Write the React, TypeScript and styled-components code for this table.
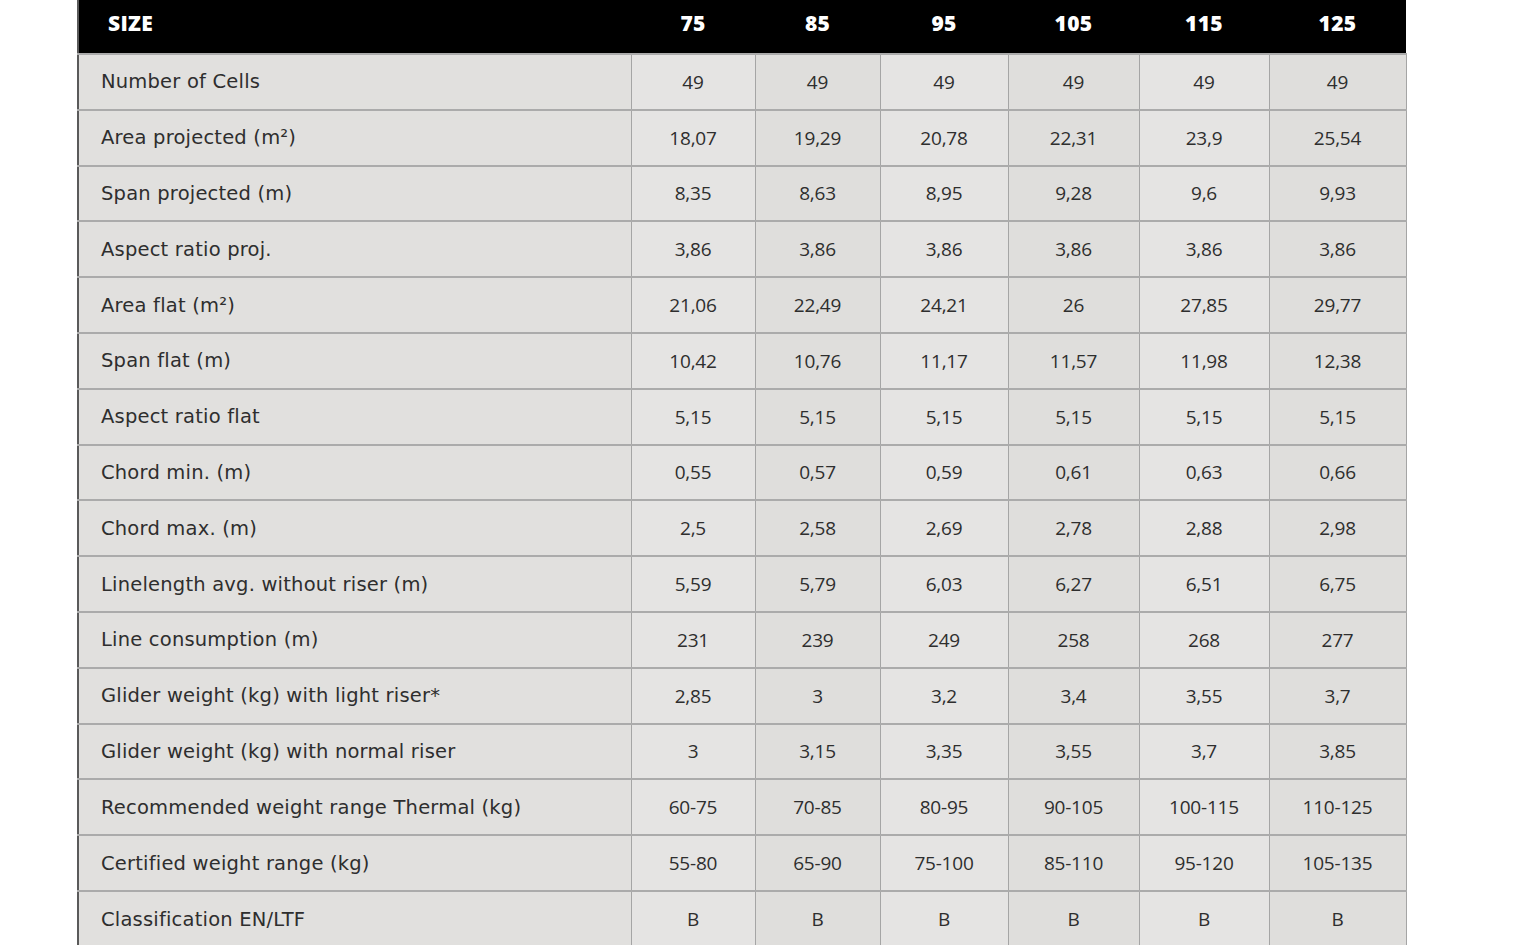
import styled, { createGlobalStyle } from 'styled-components'

const GlobalStyle = createGlobalStyle`
    html, body {
        margin: 0;
        padding: 0;
        background: #ffffff;
    }
    body {
        font-family: 'Open Sans', 'Liberation Sans', sans-serif;
    }
`

const Page = styled.div`
    width: 1530px;
    height: 945px;
    overflow: hidden;
    padding-left: 77px;
    box-sizing: border-box;
`

const Table = styled.table`
    width: 1329px;
    border-collapse: collapse;
    table-layout: fixed;
    border-left: 2px solid #5a5a5a;
`

const HeadCell = styled.th<{ $first?: boolean }>`
    height: 54px;
    padding: 0 0 8px ${(p) => (p.$first ? '29px' : '0')};
    background: #000000;
    color: #ffffff;
    font-family: 'Open Sans', 'Liberation Sans', sans-serif;
    font-weight: 800;
    font-size: 21px;
    text-align: ${(p) => (p.$first ? 'left' : 'center')};
    box-sizing: border-box;
    letter-spacing: 0.3px;
`

const Row = styled.tr`
    height: 55.8px;
`

const LabelCell = styled.td`
    padding: 0 0 0 22px;
    background: #e1e0de;
    color: #2e2e2e;
    font-family: 'DejaVu Sans', 'Open Sans', sans-serif;
    font-size: 19.5px;
    letter-spacing: 0.2px;
    border-top: 2px solid #ababab;
    border-right: 1px solid #a5a5a5;
    white-space: nowrap;
`

const ValueCell = styled.td<{ $shade: number }>`
    padding: 0;
    text-align: center;
    background: ${(p) => (p.$shade % 2 === 0 ? '#e5e4e3' : '#dfdedc')};
    color: #2e2e2e;
    font-size: 19px;
    letter-spacing: -0.2px;
    border-top: 2px solid #ababab;
    border-left: 1px solid #a5a5a5;
    border-right: 1px solid #a5a5a5;
`

const sizes = ['75', '85', '95', '105', '115', '125']
const widths = [553, 124, 125, 128, 131, 130, 137]

const rows: [string, string[]][] = [
    ['Number of Cells', ['49', '49', '49', '49', '49', '49']],
    ['Area projected (m²)', ['18,07', '19,29', '20,78', '22,31', '23,9', '25,54']],
    ['Span projected (m)', ['8,35', '8,63', '8,95', '9,28', '9,6', '9,93']],
    ['Aspect ratio proj.', ['3,86', '3,86', '3,86', '3,86', '3,86', '3,86']],
    ['Area flat (m²)', ['21,06', '22,49', '24,21', '26', '27,85', '29,77']],
    ['Span flat (m)', ['10,42', '10,76', '11,17', '11,57', '11,98', '12,38']],
    ['Aspect ratio flat', ['5,15', '5,15', '5,15', '5,15', '5,15', '5,15']],
    ['Chord min. (m)', ['0,55', '0,57', '0,59', '0,61', '0,63', '0,66']],
    ['Chord max. (m)', ['2,5', '2,58', '2,69', '2,78', '2,88', '2,98']],
    ['Linelength avg. without riser (m)', ['5,59', '5,79', '6,03', '6,27', '6,51', '6,75']],
    ['Line consumption (m)', ['231', '239', '249', '258', '268', '277']],
    ['Glider weight (kg) with light riser*', ['2,85', '3', '3,2', '3,4', '3,55', '3,7']],
    ['Glider weight (kg) with normal riser', ['3', '3,15', '3,35', '3,55', '3,7', '3,85']],
    ['Recommended weight range Thermal (kg)', ['60-75', '70-85', '80-95', '90-105', '100-115', '110-125']],
    ['Certified weight range (kg)', ['55-80', '65-90', '75-100', '85-110', '95-120', '105-135']],
    ['Classification EN/LTF', ['B', 'B', 'B', 'B', 'B', 'B']],
]

const App = () => {
    return (
        <>
            <GlobalStyle />
            <Page>
                <Table>
                    <colgroup>
                        {widths.map((w, i) => (
                            <col key={i} style={{ width: w }} />
                        ))}
                    </colgroup>
                    <thead>
                        <tr>
                            <HeadCell $first>SIZE</HeadCell>
                            {sizes.map((s) => (
                                <HeadCell key={s}>{s}</HeadCell>
                            ))}
                        </tr>
                    </thead>
                    <tbody>
                        {rows.map(([label, values]) => (
                            <Row key={label}>
                                <LabelCell>{label}</LabelCell>
                                {values.map((v, i) => (
                                    <ValueCell key={i} $shade={i}>
                                        {v}
                                    </ValueCell>
                                ))}
                            </Row>
                        ))}
                    </tbody>
                </Table>
            </Page>
        </>
    )
}

export default App
